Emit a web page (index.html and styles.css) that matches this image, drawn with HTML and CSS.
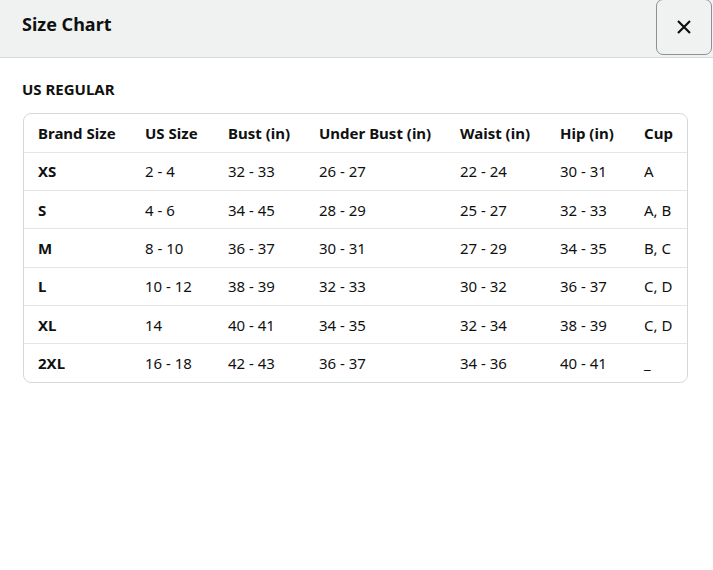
FILE: index.html
```html
<!DOCTYPE html>
<html lang="en">
<head>
<meta charset="utf-8">
<title>Size Chart</title>
<link rel="stylesheet" href="styles.css">
</head>
<body>
<div class="modal">
  <header class="modal-header">
    <h1 class="modal-title">Size Chart</h1>
    <button class="close-btn" aria-label="Close">
      <svg width="16" height="16" viewBox="0 0 16 16"><path d="M2 2 L14 14 M14 2 L2 14" stroke="#0f1111" stroke-width="2.2" stroke-linecap="butt"/></svg>
    </button>
  </header>
  <main class="modal-body">
    <h2 class="section-title">US REGULAR</h2>
    <div class="table-wrap">
      <table class="size-table">
        <colgroup>
          <col class="c1"><col class="c2"><col class="c3"><col class="c4"><col class="c5"><col class="c6"><col class="c7">
        </colgroup>
        <thead>
          <tr><th>Brand Size</th><th>US Size</th><th>Bust (in)</th><th>Under Bust (in)</th><th>Waist (in)</th><th>Hip (in)</th><th>Cup</th></tr>
        </thead>
        <tbody>
          <tr><th>XS</th><td>2 - 4</td><td>32 - 33</td><td>26 - 27</td><td>22 - 24</td><td>30 - 31</td><td>A</td></tr>
          <tr><th>S</th><td>4 - 6</td><td>34 - 45</td><td>28 - 29</td><td>25 - 27</td><td>32 - 33</td><td>A, B</td></tr>
          <tr><th>M</th><td>8 - 10</td><td>36 - 37</td><td>30 - 31</td><td>27 - 29</td><td>34 - 35</td><td>B, C</td></tr>
          <tr><th>L</th><td>10 - 12</td><td>38 - 39</td><td>32 - 33</td><td>30 - 32</td><td>36 - 37</td><td>C, D</td></tr>
          <tr><th>XL</th><td>14</td><td>40 - 41</td><td>34 - 35</td><td>32 - 34</td><td>38 - 39</td><td>C, D</td></tr>
          <tr><th>2XL</th><td>16 - 18</td><td>42 - 43</td><td>36 - 37</td><td>34 - 36</td><td>40 - 41</td><td>_</td></tr>
        </tbody>
      </table>
    </div>
  </main>
</div>
</body>
</html>
```
FILE: styles.css
```css
* { box-sizing: border-box; }
html, body { margin: 0; padding: 0; background: #fff; }
body {
  font-family: "Noto Sans", "Open Sans", sans-serif;
  color: #0f1111;
}
.modal-header {
  height: 58px;
  background: #f0f2f2;
  border-bottom: 1px solid #d5d9d9;
  display: flex;
  align-items: flex-start;
  justify-content: space-between;
  padding-left: 22px;
}
.modal-title {
  margin: 0;
  padding-top: 12px;
  font-size: 18px;
  font-weight: 700;
  line-height: 24px;
}
.close-btn {
  width: 56px;
  height: 56px;
  margin: -1px 1px 0 0;
  border: 1px solid #8d9096;
  border-radius: 7px;
  background: #f0f2f2;
  display: flex;
  align-items: center;
  justify-content: center;
  padding: 0;
  cursor: pointer;
}
.modal-body {
  padding: 20px 25px 0 23px;
}
.section-title {
  margin: 0 0 13px -1px;
  font-size: 15px;
  font-weight: 700;
  line-height: 22px;
}
.table-wrap {
  border: 1px solid #d5d9d9;
  border-radius: 8px;
  overflow: hidden;
}
.size-table {
  width: 100%;
  border-collapse: collapse;
  table-layout: fixed;
  font-size: 15px;
}
.c1 { width: 107px; }
.c2 { width: 83px; }
.c3 { width: 91px; }
.c4 { width: 141px; }
.c5 { width: 100px; }
.c6 { width: 84px; }
.c7 { width: auto; }
.size-table th, .size-table td {
  text-align: left;
  padding: 0 0 0 14px;
  height: 38.3px;
  white-space: nowrap;
}
.size-table th { font-weight: 700; }
.size-table td { font-weight: 400; }
.size-table tbody tr th, .size-table tbody tr td {
  border-top: 1px solid #e3e6e6;
}
```
